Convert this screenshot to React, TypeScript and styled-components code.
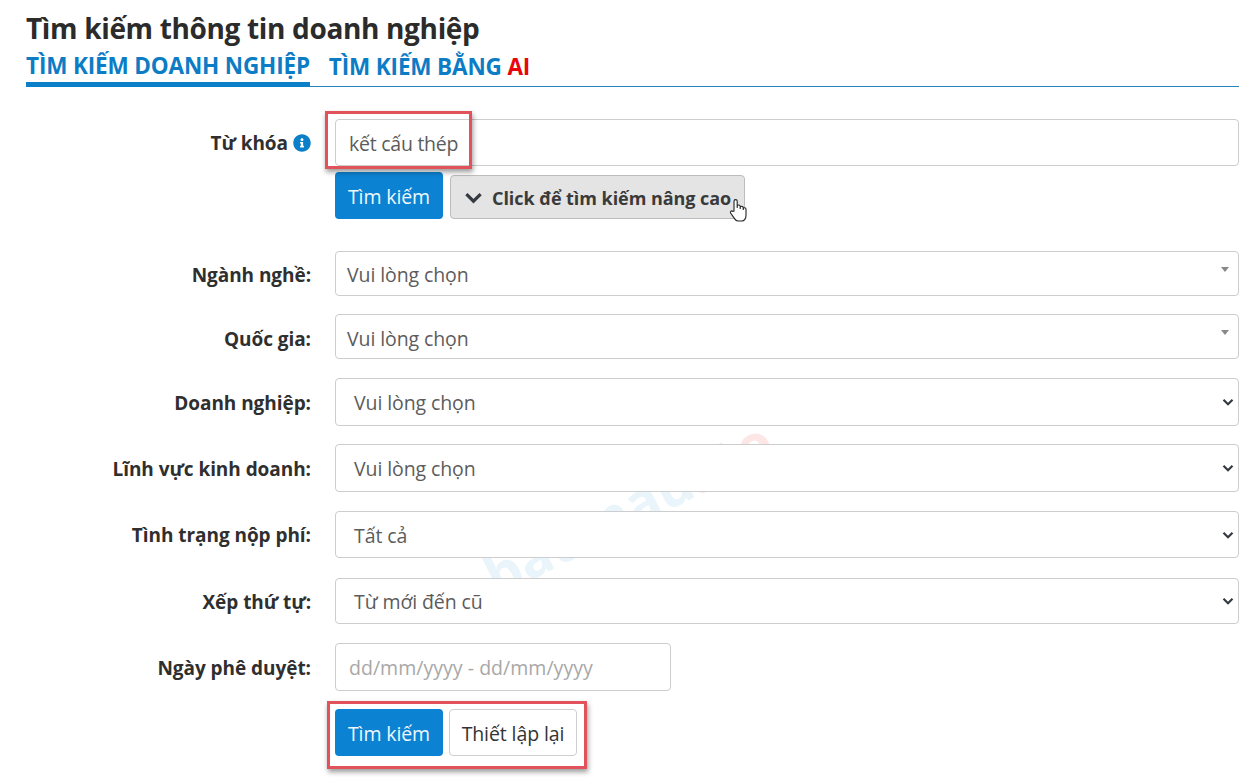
import React from "react";
import styled, { createGlobalStyle } from "styled-components";

const Global = createGlobalStyle`
  html, body { margin: 0; padding: 0; background: #fff; }
  body { font-family: "Open Sans", "Noto Sans", sans-serif; color: #333; }
  * { box-sizing: border-box; }
`;

const Page = styled.div`
  position: relative;
  width: 1258px;
  height: 778px;
  overflow: hidden;
  padding: 10px 19px 0 26px;
  background: #fff;
`;

const Title = styled.h1`
  margin: 0 0 1px;
  font-size: 28px;
  line-height: 36px;
  font-weight: 700;
  letter-spacing: -0.34px;
  color: #2b2b2b;
`;

const Tabs = styled.div`
  display: flex;
  height: 40px;
  gap: 19px;
  border-bottom: 1px solid #2a84bb;
`;

const Tab = styled.div<{ $active?: boolean }>`
  height: ${(p) => (p.$active ? "40px" : "39px")};
  font-size: 22.5px;
  line-height: ${(p) => (p.$active ? "37px" : "39px")};
  font-weight: 700;
  letter-spacing: -0.15px;
  color: #0c7cc5;
  white-space: nowrap;
  border-bottom: ${(p) => (p.$active ? "5px solid #0c7fc9" : "none")};
`;

const Red = styled.span`
  color: #e8060c;
  font-weight: 700;
`;

const Form = styled.div`
  display: flex;
  flex-direction: column;
  margin-top: 32px;
`;

const Row = styled.div<{ $top?: number }>`
  display: grid;
  grid-template-columns: 285px 1fr;
  column-gap: 24px;
  margin-top: ${(p) => p.$top ?? 0}px;
`;

const Label = styled.label<{ $h: number; $drop?: number }>`
  display: flex;
  align-items: center;
  justify-content: flex-end;
  gap: 5px;
  height: ${(p) => p.$h}px;
  padding-top: ${(p) => p.$drop ?? 0}px;
  font-size: 19px;
  font-weight: 700;
  letter-spacing: -0.05px;
  color: #2f2f2f;
  white-space: nowrap;
`;

const Field = styled.div<{ $h: number; $w?: number; $pad?: number; $drop?: number }>`
  position: relative;
  display: flex;
  align-items: center;
  height: ${(p) => p.$h}px;
  width: ${(p) => (p.$w ? `${p.$w}px` : "100%")};
  padding-left: ${(p) => p.$pad ?? 13}px;
  padding-top: ${(p) => p.$drop ?? 0}px;
  border: 1px solid #cdcdcd;
  border-radius: 4px;
  background: #fff;
  font-size: 19.5px;
  letter-spacing: -0.1px;
  color: #5c5c5c;
  white-space: nowrap;
`;

const Keyword = styled.span`
  letter-spacing: -0.25px;
`;

const Placeholder = styled.span`
  color: #a8a8a8;
  letter-spacing: 0.03px;
`;

const Caret = styled.span`
  position: absolute;
  right: 9px;
  top: 15px;
  width: 0;
  height: 0;
  border-left: 4.5px solid transparent;
  border-right: 4.5px solid transparent;
  border-top: 5px solid #888;
`;

const Chevron = styled.svg`
  position: absolute;
  right: 4px;
  top: 50%;
  margin-top: -6px;
  width: 12px;
  height: 12px;
`;

const Buttons = styled.div<{ $top: number }>`
  display: flex;
  align-items: flex-end;
  gap: 6px;
  margin-top: ${(p) => p.$top}px;
`;

const Primary = styled.div`
  display: flex;
  align-items: center;
  justify-content: center;
  width: 108px;
  height: 47px;
  padding-top: 1px;
  border-radius: 4px;
  background: #0c82d2;
  color: #eef8fd;
  font-size: 19.5px;
  letter-spacing: -0.1px;
`;

const Advanced = styled.div`
  display: flex;
  align-items: center;
  gap: 9px;
  width: 295px;
  height: 44px;
  margin-left: 1px;
  padding: 1px 0 0 13px;
  border: 1px solid #bcbcbc;
  border-radius: 4px;
  background: #e4e4e4;
  color: #3a3a3a;
  font-size: 18px;
  font-weight: 700;
  letter-spacing: -0.05px;
  white-space: nowrap;
`;

const Secondary = styled.div`
  display: flex;
  align-items: center;
  justify-content: center;
  width: 128px;
  height: 47px;
  padding-top: 1px;
  border: 1px solid #cfcfcf;
  border-radius: 4px;
  background: #fff;
  color: #333;
  font-size: 19.5px;
  letter-spacing: -0.1px;
  white-space: nowrap;
`;

const Highlight = styled.div<{ $x: number; $y: number; $w: number; $h: number }>`
  position: absolute;
  left: ${(p) => p.$x}px;
  top: ${(p) => p.$y}px;
  width: ${(p) => p.$w}px;
  height: ${(p) => p.$h}px;
  border: 3px solid #e2525a;
  box-shadow: 1px 3px 5px rgba(0, 0, 0, 0.4);
`;

const Watermark = styled.div`
  position: absolute;
  left: 500px;
  top: 548px;
  transform: rotate(-27deg);
  transform-origin: left bottom;
  font-size: 55px;
  line-height: 55px;
  font-weight: 700;
  color: #e9f4fb;
  white-space: nowrap;
`;

const WatermarkRed = styled.span`
  color: #fde6e6;
`;

const Cursor = styled.svg`
  position: absolute;
  left: 729px;
  top: 198px;
  width: 19px;
  height: 26px;
`;

const ChevronIcon = ({ size = 12, stroke = 2.6 }: { size?: number; stroke?: number }) => (
  <svg width={size} height={size} viewBox="0 0 12 12" fill="none">
    <path d="M1.5 3.8 6 8.3l4.5-4.5" stroke="#343a40" strokeWidth={stroke} />
  </svg>
);

const Info = () => (
  <svg width="18" height="18" viewBox="0 0 512 512">
    <path
      fill="#0c7fc9"
      d="M256 8C119 8 8 119 8 256s111 248 248 248 248-111 248-248S393 8 256 8zm0 110c23.2 0 42 18.8 42 42s-18.8 42-42 42-42-18.8-42-42 18.8-42 42-42zm56 254c0 6.6-5.4 12-12 12h-88c-6.6 0-12-5.4-12-12v-24c0-6.6 5.4-12 12-12h12v-64h-12c-6.6 0-12-5.4-12-12v-24c0-6.6 5.4-12 12-12h64c6.6 0 12 5.4 12 12v100h12c6.6 0 12 5.4 12 12v24z"
    />
  </svg>
);

const selects = [
  { label: "Doanh nghiệp:", value: "Vui lòng chọn", h: 48, top: 19, drop: 1, fieldDrop: 0 },
  { label: "Lĩnh vực kinh doanh:", value: "Vui lòng chọn", h: 48, top: 18, drop: 1, fieldDrop: 1 },
  { label: "Tình trạng nộp phí:", value: "Tất cả", h: 47, top: 19, drop: 0, fieldDrop: 1 },
  { label: "Xếp thứ tự:", value: "Từ mới đến cũ", h: 46, top: 20, drop: 2, fieldDrop: 0 },
];

export default function App() {
  return (
    <Page>
      <Global />
      <Watermark>
        bau.nau<WatermarkRed>..to</WatermarkRed>
      </Watermark>
      <Title>Tìm kiếm thông tin doanh nghiệp</Title>
      <Tabs>
        <Tab $active>TÌM KIẾM DOANH NGHIỆP</Tab>
        <Tab>
          TÌM KIẾM BẰNG <Red>AI</Red>
        </Tab>
      </Tabs>
      <Form>
        <Row>
          <Label $h={47}>
            Từ khóa <Info />
          </Label>
          <Field $h={47} $drop={1}>
            <Keyword>kết cấu thép</Keyword>
          </Field>
        </Row>
        <Row>
          <span />
          <Buttons $top={6}>
            <Primary>Tìm kiếm</Primary>
            <Advanced>
              <ChevronIcon size={19} stroke={2} />
              Click để tìm kiếm nâng cao
            </Advanced>
          </Buttons>
        </Row>
        <Row $top={32}>
          <Label $h={45} $drop={2}>Ngành nghề:</Label>
          <Field $h={45} $pad={11} $drop={1}>
            Vui lòng chọn
            <Caret />
          </Field>
        </Row>
        <Row $top={18}>
          <Label $h={45} $drop={5}>Quốc gia:</Label>
          <Field $h={45} $pad={11} $drop={3}>
            Vui lòng chọn
            <Caret />
          </Field>
        </Row>
        {selects.map((s) => (
          <Row key={s.label} $top={s.top}>
            <Label $h={s.h} $drop={s.drop}>{s.label}</Label>
            <Field $h={s.h} $pad={18} $drop={s.fieldDrop}>
              {s.value}
              <Chevron viewBox="0 0 12 12" fill="none">
                <path d="M1.5 3.8 6 8.3l4.5-4.5" stroke="#343a40" strokeWidth="2.2" />
              </Chevron>
            </Field>
          </Row>
        ))}
        <Row $top={19}>
          <Label $h={48} $drop={2}>Ngày phê duyệt:</Label>
          <Field $h={48} $w={336}>
            <Placeholder>dd/mm/yyyy - dd/mm/yyyy</Placeholder>
          </Field>
        </Row>
        <Row>
          <span />
          <Buttons $top={18}>
            <Primary>Tìm kiếm</Primary>
            <Secondary>Thiết lập lại</Secondary>
          </Buttons>
        </Row>
      </Form>
      <Highlight $x={325} $y={111} $w={147} $h={58} />
      <Highlight $x={327} $y={701} $w={260} $h={68} />
      <Cursor viewBox="0 0 19 26">
        <path
          d="M5 13V3.2a1.6 1.6 0 0 1 3.2 0V10l0-1.5a1.5 1.5 0 0 1 3 0V11l0-1.2a1.5 1.5 0 0 1 3 0V12l0-.8a1.4 1.4 0 0 1 2.8 0v6.3c0 3-1.8 5.5-4 5.5H9c-1.6 0-2.6-1-3.5-2.4L1.6 15c-.8-1.4 1-2.8 2.2-1.6z"
          fill="#fff"
          stroke="#222"
          strokeWidth="1.1"
        />
      </Cursor>
    </Page>
  );
}
